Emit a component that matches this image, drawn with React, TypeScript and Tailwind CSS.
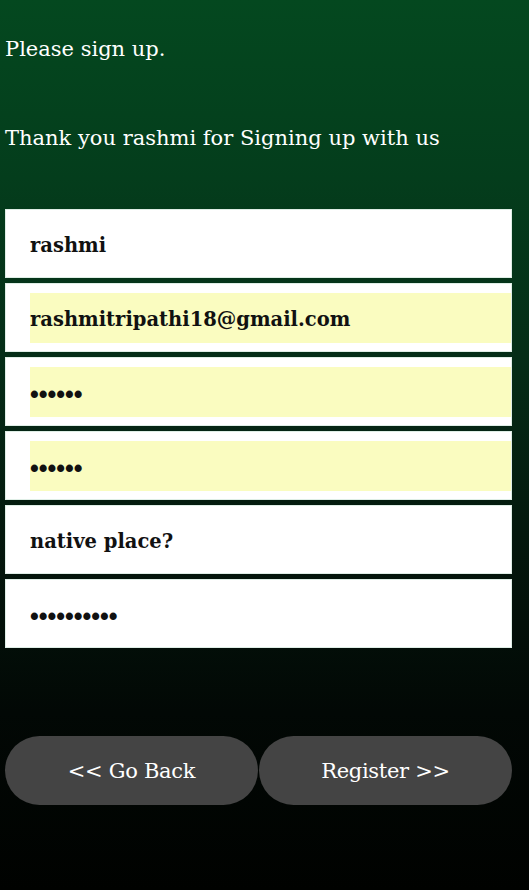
import React from "react";

const fields: { text: string; filled: boolean; dots?: boolean }[] = [
  { text: "rashmi", filled: false },
  { text: "rashmitripathi18@gmail.com", filled: true },
  { text: "••••••", filled: true, dots: true },
  { text: "••••••", filled: true, dots: true },
  { text: "native place?", filled: false },
  { text: "••••••••••", filled: false, dots: true },
];

export default function App() {
  return (
    <div
      className="min-h-[890px] w-full bg-[linear-gradient(180deg,#04481f_0%,#043d1c_20%,#052d17_40%,#04180d_60%,#020805_80%,#000200_100%)] px-[5px] text-white"
      style={{ fontFamily: '"DejaVu Serif", Georgia, serif' }}
    >
      <p className="pt-[31px] text-[21px] leading-[36px]">Please sign up.</p>
      <p className="mt-[53px] text-[21px] leading-[36px]">Thank you rashmi for Signing up with us</p>
      <div className="mt-[53px] flex w-[507px] flex-col gap-[5px]">
        {fields.map((f, i) => (
          <div key={i} className="h-[69px] border border-[#dfeee6] bg-white pl-[24px] py-[9px]">
            <div
              className={`flex h-[50px] items-center font-bold text-[#111] ${
                f.filled ? "bg-[#fafcc0]" : ""
              } ${f.dots ? "pt-[5px] text-[25px]" : "pt-[3px] text-[19.5px]"}`}
              style={f.dots ? { fontFamily: '"Liberation Sans", Arial, sans-serif' } : undefined}
            >
              {f.text}
            </div>
          </div>
        ))}
      </div>
      <div className="mt-[88px] flex w-[507px] gap-[1px]">
        <button className="flex h-[69px] flex-1 items-center justify-center rounded-full bg-[#444444] pt-[3px] text-[21px] text-white tracking-[-0.3px]">
          &lt;&lt; Go Back
        </button>
        <button className="flex h-[69px] flex-1 items-center justify-center rounded-full bg-[#444444] pt-[3px] text-[21px] text-white tracking-[-0.3px]">
          Register &gt;&gt;
        </button>
      </div>
    </div>
  );
}
